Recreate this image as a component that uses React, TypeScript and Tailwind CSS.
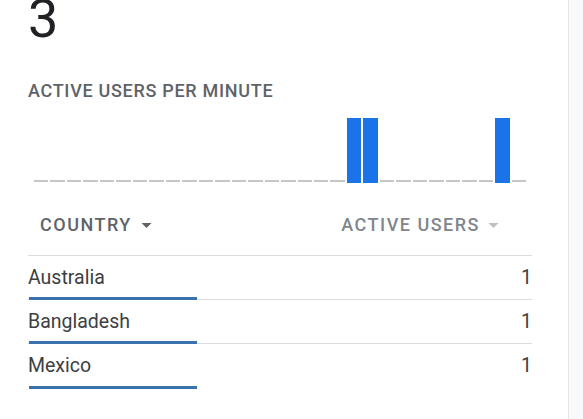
import React from "react";

// minutes with activity in the last 30 min
const activeSlots = [19, 20, 28];
const slots = Array.from({ length: 30 }, (_, i) => activeSlots.includes(i));

const rows = [
  { country: "Australia", users: 1 },
  { country: "Bangladesh", users: 1 },
  { country: "Mexico", users: 1 },
];

function Caret({ className }: { className: string }) {
  return (
    <svg viewBox="0 0 10 5" className={className}>
      <path d="M0 0 L10 0 L5 5 Z" fill="currentColor" />
    </svg>
  );
}

export default function App() {
  return (
    <div className="flex w-[583px] h-[419px] overflow-hidden bg-white font-['Roboto','Liberation_Sans',sans-serif]">
      <div className="w-[569px] shrink-0 border-r border-[#e6e6e6] pl-[28px] pr-[36px]">
        {/* Total */}
        <div className="mt-[-8px] text-[54px] leading-none font-normal text-[#202124]">3</div>

        {/* Per-minute chart */}
        <div className="mt-[35px] text-[18px] leading-[20px] font-medium tracking-[0.7px] text-[#5f6368]">
          ACTIVE USERS PER MINUTE
        </div>
        <div className="mt-[17px] h-[65px] px-[6px] flex items-end gap-[2px]">
          {slots.map((on, i) =>
            on ? (
              <div key={i} className="flex-1 h-[65px] bg-[#1a73e8]" />
            ) : (
              <div key={i} className="flex-1 h-[2px] mb-[1px] bg-[#c6c6c6]" />
            )
          )}
        </div>

        {/* Table */}
        <div className="mt-[31px] flex items-start pt-[1px] h-[42px] border-b border-[#dadce0]">
          <div className="flex-1 flex items-center gap-[9px] pl-[12px] text-[18px] leading-[20px] font-medium tracking-[1.5px] text-[#5f6368]">
            COUNTRY
            <Caret className="w-[11px] h-[5px] text-[#5f6368]" />
          </div>
          <div className="flex items-center gap-[8px] pr-[33px] text-[18px] leading-[20px] font-medium tracking-[1.5px] text-[#80868b]">
            ACTIVE USERS
            <Caret className="w-[11px] h-[5px] text-[#bdc1c6]" />
          </div>
        </div>
        {rows.map((r, i) => (
          <div
            key={r.country}
            className={`relative flex items-center h-[44px] ${i < rows.length - 1 ? "border-b border-[#dadce0]" : ""}`}
          >
            <div className="flex-1 text-[19.5px] text-[#3c4043]">{r.country}</div>
            <div className="text-[19.5px] text-[#3c4043]">{r.users}</div>
            <div className="absolute left-[1px] bottom-[-1px] w-[168px] h-[3px] bg-[#3a72ad]" />
          </div>
        ))}
      </div>
      <div className="flex-1 bg-[#f8f9fa]" />
    </div>
  );
}
